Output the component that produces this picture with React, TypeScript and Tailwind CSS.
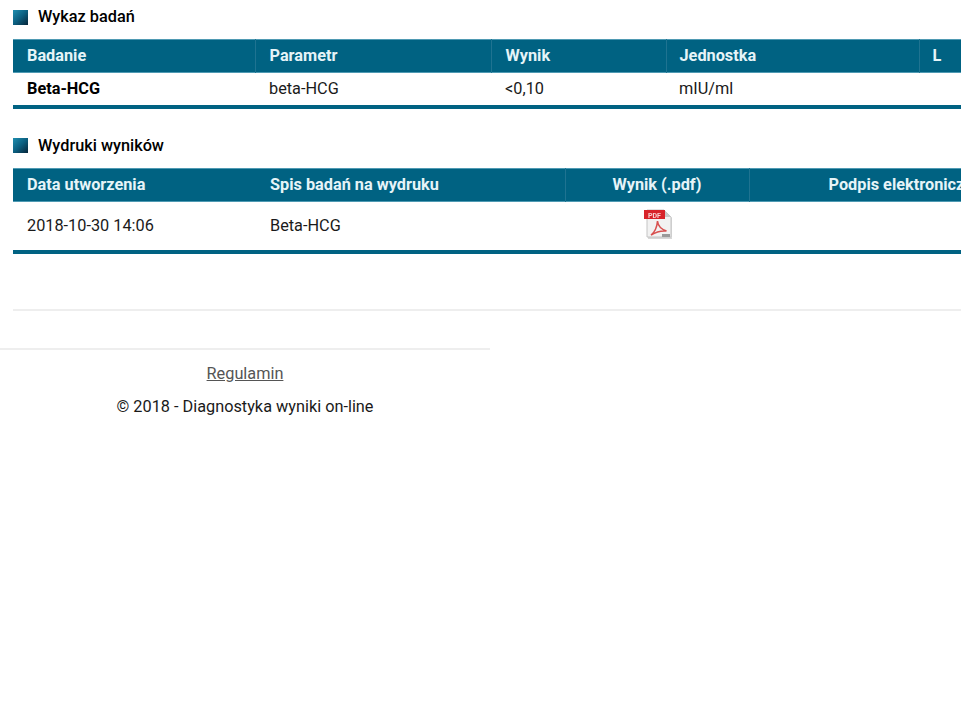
const th = 'h-[33px] px-[14px] pt-[1px] pb-0 font-bold text-[#e6f4f8] border-l border-[#1f7391] first:border-l-0';
const stripe = 'border-t border-b border-[#4f9ab3]';
const td = 'px-[14px] pt-[1px] pb-0 border-b-[4px] border-[#006282] shadow-[0_1px_0_#c5e6f0]';

function SectionTitle({ children }: { children: string }) {
  return (
    <div className="flex items-center gap-[10px] h-[18px] pl-[13px]">
      <span className="shrink-0 w-[15px] h-[15px] bg-gradient-to-br from-[#1f8fb0] via-[#0b5f80] to-[#06263a]" />
      <h2 className="font-medium text-[16.3px] leading-[18px] text-black">{children}</h2>
    </div>
  );
}

function PdfIcon() {
  return (
    <svg width="32" height="34" viewBox="0 0 32 34" className="mx-auto translate-x-[1px] -translate-y-[2px] blur-[0.4px]">
      <path d="M5 3h17l7 7v21H5z" fill="#c8c8c8" transform="translate(1 1)" opacity="0.7" />
      <path d="M5 3h17l7 7v20H5z" fill="#f2f2f2" stroke="#c4c4c4" strokeWidth="1" />
      <path d="M22 3v7h7z" fill="#c9c9c9" />
      <rect x="2" y="3" width="21" height="9" fill="#d8232a" />
      <text x="12.5" y="10.5" textAnchor="middle" fontSize="7" fontWeight="700" fill="#f8d0d0" fontFamily="Roboto, sans-serif">PDF</text>
      <path d="M9 28c4-3 6-8 6.500-14 .5 5 3 8 9 10-5-.5-10 .5-15.500 4z" fill="none" stroke="#d8504f" strokeWidth="1.500" />
      <rect x="20" y="27" width="8" height="3" fill="#9a9a9a" />
    </svg>
  );
}

export default function App() {
  return (
    <div className="w-[961px] h-[724px] overflow-hidden bg-white font-['Roboto',sans-serif] text-[16.3px] text-[#1a1a1a]">
      <div className="pt-[8px]">
        <SectionTitle>Wykaz badań</SectionTitle>
      </div>

      <div className="mt-[13px] pl-[13px]">
        <table className="w-[1000px] table-fixed border-collapse">
          <colgroup>
            <col className="w-[242px]" />
            <col className="w-[236px]" />
            <col className="w-[175px]" />
            <col className="w-[253px]" />
            <col />
          </colgroup>
          <thead>
            <tr className={`bg-[#006282] ${stripe}`}>
              <th className={`${th} text-left`}>Badanie</th>
              <th className={`${th} text-left`}>Parametr</th>
              <th className={`${th} text-left`}>Wynik</th>
              <th className={`${th} text-left`}>
                <span className="-ml-[1px]">Jednostka</span>
              </th>
              <th className={`${th} text-left`}>
                <span className="-ml-[1px]">L</span>
              </th>
            </tr>
          </thead>
          <tbody>
            <tr>
              <td className={`${td} h-[34px] font-bold text-black`}>Beta-HCG</td>
              <td className={`${td} h-[34px]`}>beta-HCG</td>
              <td className={`${td} h-[34px]`}>&lt;0,10</td>
              <td className={`${td} h-[34px]`}>
                <span className="-ml-[1px]">mIU/ml</span>
              </td>
              <td className={`${td} h-[34px]`} />
            </tr>
          </tbody>
        </table>
      </div>

      <div className="mt-[28px]">
        <SectionTitle>Wydruki wyników</SectionTitle>
      </div>

      <div className="mt-[13px] pl-[13px]">
        <table className="w-[1100px] table-fixed border-collapse">
          <colgroup>
            <col className="w-[243px]" />
            <col className="w-[309px]" />
            <col className="w-[184px]" />
            <col />
          </colgroup>
          <thead>
            <tr className={`bg-[#006282] ${stripe}`}>
              <th className={`${th} text-left`}>Data utworzenia</th>
              <th className="h-[33px] px-[14px] pt-[1px] pb-0 text-left font-bold text-[#e6f4f8]">Spis badań na wydruku</th>
              <th className={`${th} text-center`}>Wynik (.pdf)</th>
              <th className={`${th} text-left`}>
                <span className="pl-[65px]">Podpis elektroniczny</span>
              </th>
            </tr>
          </thead>
          <tbody>
            <tr>
              <td className={`${td} h-[51px]`}>2018-10-30 14:06</td>
              <td className={`${td} h-[51px]`}>Beta-HCG</td>
              <td className={`${td} h-[51px] px-0`}>
                <PdfIcon />
              </td>
              <td className={`${td} h-[51px] px-0`} />
            </tr>
          </tbody>
        </table>
      </div>

      <hr className="mt-[55px] ml-[13px] border-0 border-t-2 border-[#eeeeee]" />

      <footer className="mt-[37px] w-[490px] border-t-2 border-[#eeeeee] text-center">
        <a href="#" className="block mt-[14px] leading-[20px] text-[#555555] underline">Regulamin</a>
        <p className="mt-[13px] leading-[20px] text-[#1a1a1a]">© 2018 - Diagnostyka wyniki on-line</p>
      </footer>
    </div>
  );
}
